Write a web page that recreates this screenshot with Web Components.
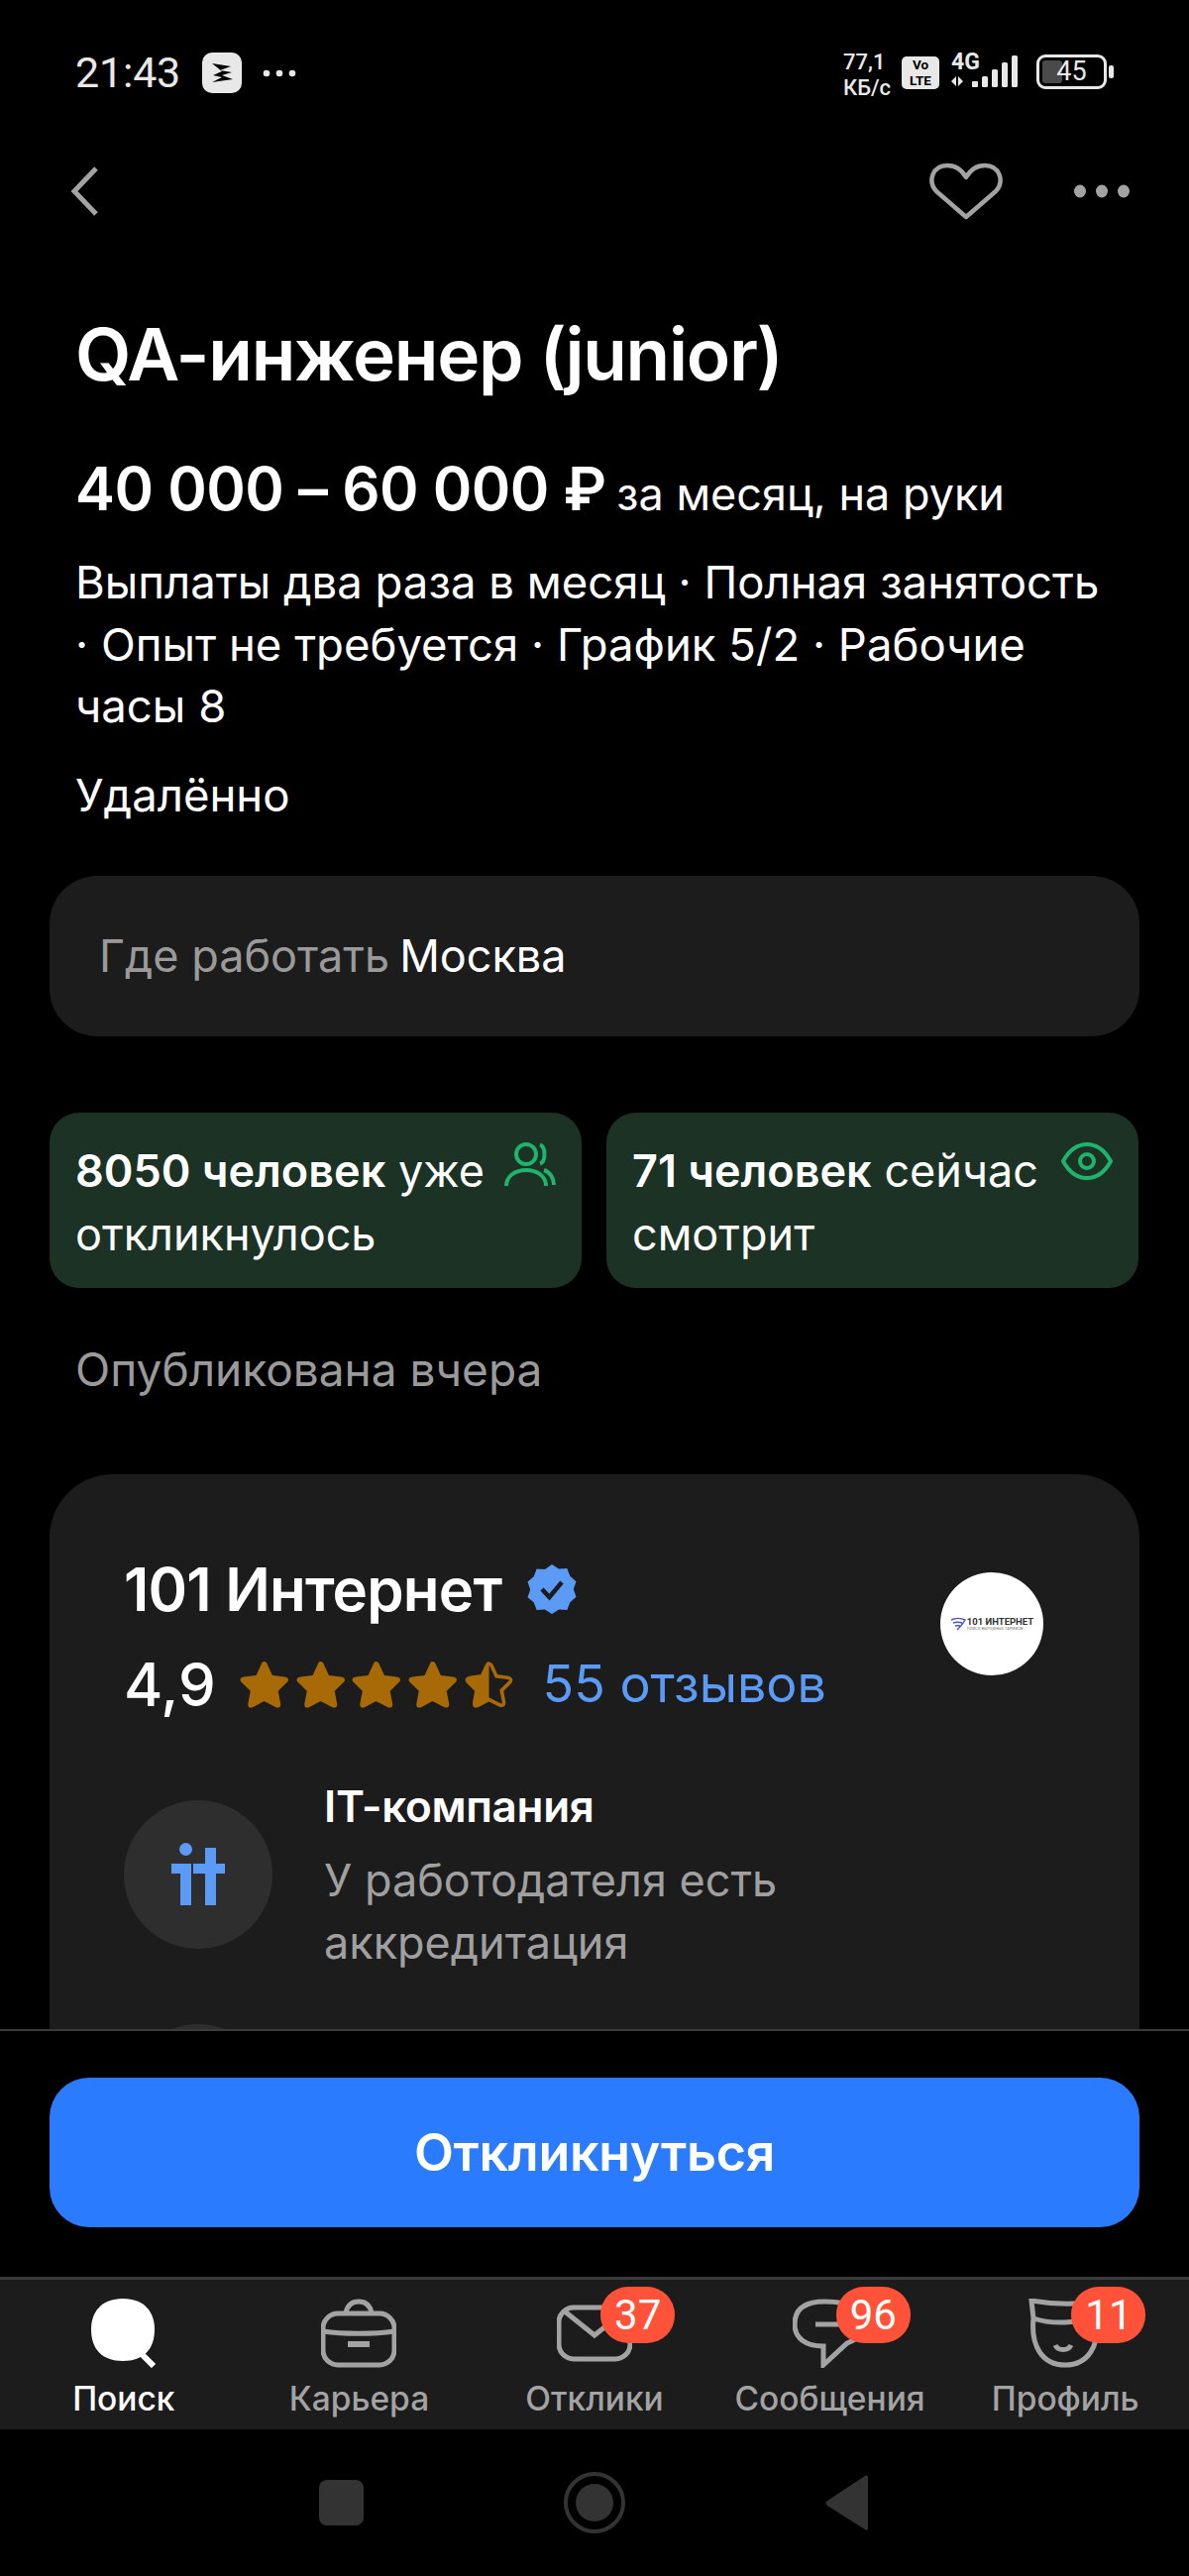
<!DOCTYPE html>
<html lang="ru">
<head>
<meta charset="utf-8">
<title>QA-инженер (junior)</title>
<style>
  html, body { margin: 0; background: #000; }
  body { font-family: Inter, Roboto, "Liberation Sans", sans-serif; color: #fff; }
</style>
</head>
<body>
<vacancy-page>
  <status-bar slot="top"></status-bar>
  <top-nav slot="top"></top-nav>

  <vacancy-head title="QA-инженер (junior)" salary="40 000 – 60 000 ₽" note="за месяц, на руки" place="Удалённо">
    Выплаты два раза в месяц · Полная занятость<br>· Опыт не требуется · График 5/2 · Рабочие<br>часы 8
  </vacancy-head>

  <where-card label="Где работать" value="Москва"></where-card>

  <stat-row>
    <stat-card icon="people"><b>8050 человек</b> уже<br>откликнулось</stat-card>
    <stat-card icon="eye"><b>71 человек</b> сейчас<br>смотрит</stat-card>
  </stat-row>

  <publish-date>Опубликована вчера</publish-date>

  <company-card name="101 Интернет" rating="4,9" reviews="55 отзывов">
    <company-fact badge="it" title="IT-компания">У работодателя есть<br>аккредитация</company-fact>
    <company-fact badge="" title="" ></company-fact>
  </company-card>

  <action-bar slot="bottom" label="Откликнуться"></action-bar>
  <tab-bar slot="bottom">
    <tab-item icon="search" active>Поиск</tab-item>
    <tab-item icon="case">Карьера</tab-item>
    <tab-item icon="mail" count="37">Отклики</tab-item>
    <tab-item icon="chat" count="96">Сообщения</tab-item>
    <tab-item icon="face" count="11">Профиль</tab-item>
  </tab-bar>
  <system-nav slot="bottom"></system-nav>
</vacancy-page>

<script>
// Small helper so every element gets an open shadow root with its own styles
class ShadowEl extends HTMLElement {
  constructor() {
    super();
    this.attachShadow({ mode: "open" });
  }
  connectedCallback() {
    this.shadowRoot.innerHTML = this.render();
  }
  attr(name) {
    return this.getAttribute(name) || "";
  }
}

class VacancyPage extends ShadowEl {
  render() {
    return `
      <style>
        :host { display: flex; flex-direction: column; width: 1200px; height: 2600px; overflow: hidden; background: #000; }
        .scroll { flex: 1; min-height: 0; overflow: hidden; padding: 0 50px; }
      </style>
      <slot name="top"></slot>
      <div class="scroll"><slot></slot></div>
      <slot name="bottom"></slot>`;
  }
}

class StatusBar extends ShadowEl {
  render() {
    return `
      <style>
        :host { display: flex; align-items: flex-start; height: 138px; padding: 52px 76px 0 76px; box-sizing: border-box; color: #e8e8e8; font-family: Roboto, sans-serif; }
        .time { font-size: 43px; line-height: 42px; width: 128px; letter-spacing: -.2px; }
        .app { width: 40px; height: 41px; background: #e8e8e8; border-radius: 10px; display: block; margin-top: 1px; }
        .more { margin: 18px 0 0 21px; }
        .right { margin-left: auto; display: flex; align-items: flex-start; }
        .speed { width: 59px; font-size: 22px; line-height: 26px; font-weight: 500; margin-top: -2px; white-space: nowrap; }
        .volte { width: 38px; height: 33px; margin-top: 5px; background: #e8e8e8; color: #000; border-radius: 5px; font-size: 13.500px; line-height: 16px; font-weight: 700; text-align: center; box-sizing: border-box; }
        .net { width: 70px; margin-left: 12px; margin-right: 16px; position: relative; }
        .net span { font-size: 23px; line-height: 22px; font-weight: 700; display: block; }
        .batt { width: 71px; height: 35px; border: 3px solid #e8e8e8; border-radius: 9px; box-sizing: border-box; margin-top: 3px; font-size: 27px; line-height: 29px; text-align: center; position: relative; }
        .batt i { position: absolute; left: 3px; top: 3px; bottom: 3px; width: 20px; background: #4a4a4a; border-radius: 3px; }
        .batt span { position: relative; }
        .nub { width: 5px; height: 13px; background: #e8e8e8; border-radius: 2px; margin: 14px 0 0 2px; }
      </style>
      <span class="time">21:43</span>
      <svg class="app" viewBox="0 0 40 41"><path d="M10 11l19 3-11 4 12 2-10 3 11 4-21 3 10-5-9-2 9-4z" fill="#000"/></svg>
      <svg class="more" width="34" height="8" viewBox="0 0 34 8" fill="#e8e8e8"><circle cx="4" cy="4" r="3.3"/><circle cx="17" cy="4" r="3.3"/><circle cx="30" cy="4" r="3.3"/></svg>
      <div class="right">
        <div class="speed">77,1<br>КБ/с</div>
        <div class="volte">Vo<br>LTE</div>
        <div class="net">
          <span>4G</span>
          <svg width="70" height="36" viewBox="0 0 70 36" style="position:absolute;left:0;top:4px" fill="#e8e8e8">
            <path d="M0 26l5-5v10zM7 21l5 5-5 5zM7 31v-10h0z"/>
            <rect x="21" y="26" width="6" height="6" rx="1"/><rect x="31" y="21" width="6" height="11" rx="1.5"/><rect x="41" y="14" width="6" height="18" rx="1.5"/><rect x="51" y="7" width="6" height="25" rx="1.5"/><rect x="61" y="0" width="6" height="32" rx="1.5"/>
          </svg>
        </div>
        <div class="batt"><i></i><span>45</span></div>
        <div class="nub"></div>
      </div>`;
  }
}

class TopNav extends ShadowEl {
  render() {
    return `
      <style>
        :host { display: flex; align-items: center; height: 110px; padding: 0 60px 0 71px; box-sizing: border-box; }
        .fav { margin-left: auto; margin-right: 71px; }
      </style>
      <svg width="28" height="50" viewBox="0 0 28 50" fill="none" stroke="#a3a3a3" stroke-width="5"><path d="M26 2L4 25l22 23"/></svg>
      <svg class="fav" width="76" height="58" viewBox="0 0 76 58" fill="none" stroke="#a3a3a3" stroke-width="4.5" stroke-linejoin="round"><path d="M38 55L8 29C-1 19 4 3 19 3c9 0 15 5 19 12C42 8 48 3 57 3c15 0 20 16 11 26z"/></svg>
      <svg width="56" height="14" viewBox="0 0 56 14" fill="#a3a3a3"><ellipse cx="6" cy="7" rx="6" ry="6.5"/><ellipse cx="28" cy="7" rx="6" ry="6.5"/><ellipse cx="50" cy="7" rx="6" ry="6.5"/></svg>`;
  }
}

class VacancyHead extends ShadowEl {
  render() {
    return `
      <style>
        :host { display: block; padding: 0 26px; }
        h1 { margin: 0; font-size: 73px; line-height: 80px; font-weight: 600; letter-spacing: -1.300px; padding-top: 70px; white-space: nowrap; }
        .pay { margin-top: 60px; line-height: 70px; white-space: nowrap; }
        .pay b { font-size: 60px; font-weight: 600; letter-spacing: -.5px; }
        .pay span { font-size: 45px; margin-left: 6px; }
        .text { font-size: 45.500px; line-height: 62.500px; margin-top: 13px; white-space: nowrap; }
        .place { font-size: 45.500px; line-height: 62px; margin-top: 27px; }
      </style>
      <h1>${this.attr("title")}</h1>
      <div class="pay"><b>${this.attr("salary")}</b> <span>${this.attr("note")}</span></div>
      <div class="text"><slot></slot></div>
      <div class="place">${this.attr("place")}</div>`;
  }
}

class WhereCard extends ShadowEl {
  render() {
    return `
      <style>
        :host { display: flex; align-items: center; height: 162px; margin-top: 50px; padding: 0 50px; box-sizing: border-box; background: #1c1c1c; border-radius: 48px; font-size: 45px; }
        span { color: #9a9a9a; margin-right: 10px; }
      </style>
      <span>${this.attr("label")}</span>${this.attr("value")}`;
  }
}

class StatRow extends ShadowEl {
  render() {
    return `
      <style>
        :host { display: grid; grid-template-columns: 537px 537px; gap: 25px; margin-top: 77px; }
      </style>
      <slot></slot>`;
  }
}

class StatCard extends ShadowEl {
  render() {
    const icons = {
      people: `<svg width="52" height="46" viewBox="0 0 52 46" fill="none" stroke="#1db46e" stroke-width="4"><circle cx="22" cy="12" r="10"/><path d="M36 2.500c6 2 6 17 0 19M2 44c0-10 9-16 20-16s20 6 20 16M40 28c6 2 10 8 10 15"/></svg>`,
      eye: `<svg width="52" height="38" viewBox="0 0 52 38" fill="none" stroke="#1db46e" stroke-width="4"><path d="M2 19C8 8 16 2 26 2s18 6 24 17c-6 11-14 17-24 17S8 30 2 19z"/><circle cx="26" cy="19" r="7"/></svg>`,
    };
    return `
      <style>
        :host { display: flex; justify-content: space-between; align-items: flex-start; height: 177px; padding: 27px 26px 0 26px; box-sizing: border-box; background: #1c3225; border-radius: 30px; font-size: 45px; line-height: 64px; white-space: nowrap; }
        ::slotted(b) { font-weight: 600; }
        svg { flex: none; margin-top: 3px; }
      </style>
      <div><slot></slot></div>
      ${icons[this.attr("icon")]}`;
  }
}

class PublishDate extends ShadowEl {
  render() {
    return `
      <style>
        :host { display: block; margin: 51px 0 0 26px; font-size: 46px; line-height: 62px; color: #9a9a9a; }
      </style>
      <slot></slot>`;
  }
}

class CompanyCard extends ShadowEl {
  render() {
    const star = "M25.500 1c1.600 0 2.600 1.300 3.400 3l5 11 12.500 1.500c3.500.5 4.800 3 2.300 5.500l-9 8.800 2.400 12.400c.7 3.800-1.500 5.500-5 3.700L25.500 41 14.400 46.900c-3.500 1.800-5.700.1-5-3.700l2.400-12.400-9-8.800C.3 19.500 1.600 17 5.100 16.500L17.600 15l5-11c.8-1.700 1.300-3 2.900-3z";
    const stars = [0, 1, 2, 3].map(() => `<svg width="51" height="48" viewBox="0 0 51 48"><path d="${star}" fill="#a86a06"/></svg>`).join("");
    const half = `<svg width="51" height="48" viewBox="0 0 51 48"><defs><clipPath id="left"><rect width="25.500" height="48"/></clipPath></defs><path d="${star}" fill="none" stroke="#a86a06" stroke-width="4" transform="translate(2.500 2.400) scale(.9)"/><path d="${star}" fill="#a86a06" clip-path="url(#left)"/></svg>`;
    return `
      <style>
        :host { display: block; position: relative; margin-top: 75px; padding: 74px 75px 0; background: #1c1c1c; border-radius: 64px; }
        .name { display: flex; align-items: center; font-size: 60px; line-height: 84px; font-weight: 600; letter-spacing: -.8px; }
        .name svg { margin-left: 26px; }
        .rate { display: flex; align-items: center; font-size: 60px; line-height: 84px; font-weight: 500; margin-top: 12px; }
        .stars { display: flex; gap: 5.700px; margin-left: 23px; }
        .link { color: #5b9bf5; font-size: 52px; font-weight: 400; margin-left: 29px; }
        .logo { position: absolute; right: 97px; top: 99px; width: 104px; height: 104px; border-radius: 50%; background: #fff; display: flex; align-items: center; justify-content: center; gap: 1px; color: #333; font-family: Roboto, sans-serif; }
        .logo b { display: block; font-size: 9.500px; line-height: 9px; white-space: nowrap; font-weight: 700; }
        .logo small { display: block; font-size: 4px; line-height: 5px; white-space: nowrap; color: #777; }
        .facts { margin-top: 50px; display: flex; flex-direction: column; gap: 51px; }
      </style>
      <div class="name">${this.attr("name")}
        <svg width="50" height="50" viewBox="0 0 50 50"><path d="M25 0l7 4.500 8.300-.5 3 7.800 6.200 5.400-2.700 7.800 2.700 7.800-6.200 5.400-3 7.800-8.300-.5L25 50l-7-4.500-8.300.5-3-7.800L.5 33.200l2.700-7.800L.5 17.600l6.200-5.400 3-7.800 8.300.5z" fill="#5b9bf5"/><path d="M15 25l7.500 8L35 18" fill="none" stroke="#1c1c1c" stroke-width="4.500"/></svg>
      </div>
      <div class="rate">${this.attr("rating")}<span class="stars">${stars}${half}</span><span class="link">${this.attr("reviews")}</span></div>
      <div class="logo">
        <svg width="16" height="14" viewBox="0 0 16 14" fill="none" stroke="#4a56d8" stroke-width="1.500"><path d="M1 3c4-2 10-2 14 0-2 4-5 7-8 10M3 6c3-1 6-1 9 0M5 9c2-.5 3-.5 5 0"/></svg>
        <span><b>101 ИНТЕРНЕТ</b><small>ПОИСК ВЫГОДНЫХ ТАРИФОВ</small></span>
      </div>
      <div class="facts"><slot></slot></div>`;
  }
}

class CompanyFact extends ShadowEl {
  render() {
    const it = this.attr("badge") === "it"
      ? `<svg width="54" height="63" viewBox="0 0 54 63" fill="#5b9bf5"><circle cx="14.500" cy="6.500" r="6.500"/><rect x="0" y="21" width="20" height="10"/><rect x="9" y="21" width="11" height="42"/><rect x="34" y="5" width="11" height="58"/><rect x="22" y="21" width="32" height="10"/></svg>`
      : "";
    const text = this.attr("badge") === "it"
      ? `<div>
          <div class="title">${this.attr("title")}</div>
          <div class="sub"><slot></slot></div>
        </div>`
      : "";
    return `
      <style>
        :host { display: grid; grid-template-columns: 150px 1fr; column-gap: 52px; align-items: center; min-height: 150px; }
        .badge { width: 150px; height: 150px; border-radius: 50%; background: #2e2e2e; display: flex; align-items: center; justify-content: center; }
        .title { font-size: 44px; line-height: 62px; font-weight: 600; letter-spacing: -.3px; }
        .sub { font-size: 45px; line-height: 63px; color: #a0a0a0; margin-top: 12px; }
      </style>
      <div class="badge">${it}</div>
      ${text}`;
  }
}

class ActionBar extends ShadowEl {
  render() {
    return `
      <style>
        :host { display: block; flex: none; height: 250px; padding: 47px 50px 0; box-sizing: border-box; background: #000; border-top: 2px solid #3a3a3a; }
        button { display: block; width: 100%; height: 151px; border: 0; border-radius: 40px; background: #2b7bff; color: #fff; font: 600 52px Inter, sans-serif; letter-spacing: -.3px; }
      </style>
      <button>${this.attr("label")}</button>`;
  }
}

class TabBar extends ShadowEl {
  render() {
    return `
      <style>
        :host { display: grid; grid-template-columns: repeat(5, 237.600px); justify-content: center; flex: none; height: 154px; box-sizing: border-box; background: #1c1c1c; border-top: 3px solid #3a3a3a; }
      </style>
      <slot></slot>`;
  }
}

class TabItem extends ShadowEl {
  render() {
    const icons = {
      search: `<svg width="76" height="70" viewBox="0 0 76 70"><path d="M37 0c22 0 32 14 32 31 0 20-11 32-32 32C16 63 5 51 5 31 5 14 15 0 37 0z" fill="#fff"/><path d="M53 53l15 15" stroke="#fff" stroke-width="6" fill="none"/></svg>`,
      case: `<svg width="76" height="70" viewBox="0 0 76 70" fill="none" stroke="#a3a3a3" stroke-width="5"><rect x="2" y="15" width="72" height="52" rx="15"/><path d="M2 33c20 3 52 3 72 0M25 14c2-8 7-11 13-11s11 3 13 11"/><path d="M27 46h22" stroke-width="6"/></svg>`,
      mail: `<svg width="76" height="70" viewBox="0 0 76 70" fill="none" stroke="#a3a3a3" stroke-width="5"><rect x="2" y="9" width="72" height="52" rx="15"/><path d="M8 13l30 24 30-24"/></svg>`,
      chat: `<svg width="76" height="70" viewBox="0 0 76 70" fill="none" stroke="#a3a3a3" stroke-width="5"><path d="M32 3C12 3 2 11 2 26c0 14 11 22 29 22l0 19 24-22c12-5 19-11 19-22S60 3 32 3z"/><path d="M23 26h32"/></svg>`,
      face: `<svg width="76" height="70" viewBox="0 0 76 70" fill="none" stroke="#a3a3a3" stroke-width="5"><path d="M4 2c22 4 46 4 66 1v13C52 26 24 26 6 20zM6 20c-3 28 9 47 32 47s35-19 32-47"/><path d="M28 47c3 6 13 6 16 0"/></svg>`,
    };
    const badge = this.attr("count") ? `<span class="badge">${this.attr("count")}</span>` : "";
    return `
      <style>
        :host { display: flex; flex-direction: column; align-items: center; position: relative; padding-top: 19px; font-size: 33.500px; line-height: 42px; font-weight: 500; color: ${this.hasAttribute("active") ? "#fff" : "#a3a3a3"}; white-space: nowrap; }
        svg { display: block; margin-bottom: 10px; }
        .badge { position: absolute; left: 125px; top: 7px; width: 75px; height: 57px; border-radius: 28px; background: #ff5238; color: #fff; font-family: Roboto, sans-serif; font-size: 42px; font-weight: 400; line-height: 57px; text-align: center; }
      </style>
      ${icons[this.attr("icon")]}
      <slot></slot>
      ${badge}`;
  }
}

class SystemNav extends ShadowEl {
  render() {
    return `
      <style>
        :host { display: flex; align-items: center; justify-content: center; flex: none; height: 148px; background: #000; }
        svg { display: block; }
      </style>
      <svg width="566" height="64" viewBox="0 0 566 64" fill="#333">
        <rect x="5" y="9" width="45" height="46" rx="8"/>
        <circle cx="283" cy="32" r="29" fill="none" stroke="#333" stroke-width="4"/>
        <circle cx="283" cy="32" r="19"/>
        <path d="M559 6v52c0 2-2 2-3 1L518 35c-2-2-2-4 0-5l38-25c1-1 3 0 3 1z"/>
      </svg>`;
  }
}

// Register everything up front, no delay
customElements.define("company-fact", CompanyFact);
customElements.define("company-card", CompanyCard);
customElements.define("status-bar", StatusBar);
customElements.define("top-nav", TopNav);
customElements.define("vacancy-head", VacancyHead);
customElements.define("where-card", WhereCard);
customElements.define("stat-row", StatRow);
customElements.define("stat-card", StatCard);
customElements.define("publish-date", PublishDate);
customElements.define("action-bar", ActionBar);
customElements.define("tab-item", TabItem);
customElements.define("tab-bar", TabBar);
customElements.define("system-nav", SystemNav);
customElements.define("vacancy-page", VacancyPage);
</script>
</body>
</html>
